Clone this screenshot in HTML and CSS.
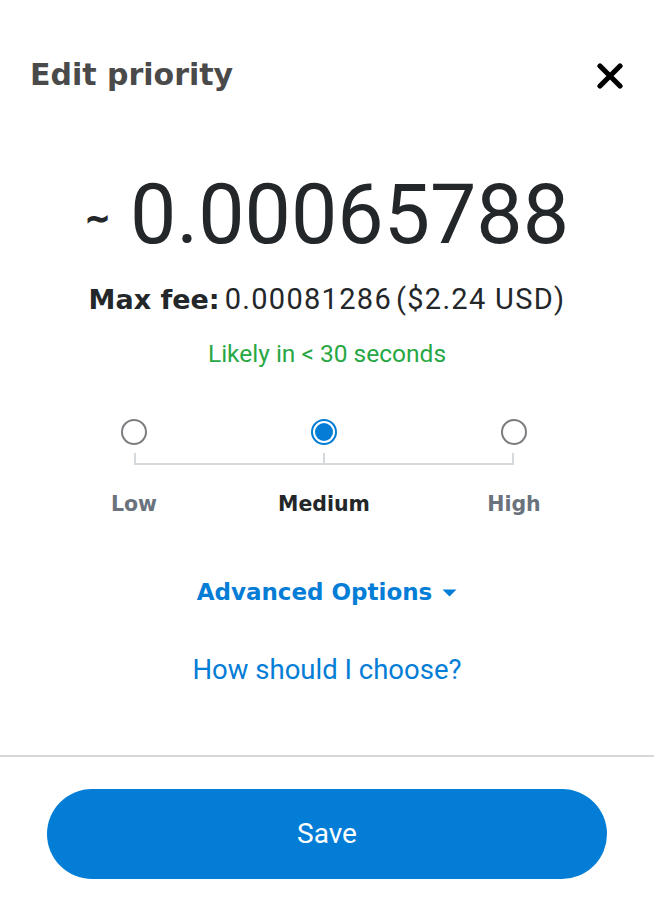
FILE: index.html
```html
<!DOCTYPE html>
<html lang="en">
<head>
<meta charset="utf-8">
<title>Edit priority</title>
<link rel="stylesheet" href="styles.css">
</head>
<body>
<div class="modal">
  <header class="header">
    <h1 class="title">Edit priority</h1>
    <button class="close" aria-label="Close">
      <svg width="26" height="26" viewBox="0 0 26 26"><path d="M3 3 L23 23 M23 3 L3 23" stroke="#000" stroke-width="5.2" stroke-linecap="round" fill="none"/></svg>
    </button>
  </header>

  <div class="amount">
    <span class="tilde">~</span>
    <span class="value">0.00065788</span>
  </div>

  <div class="max-fee"><span class="label">Max fee:</span><span class="fee">0.00081286</span><span class="fee fiat">($2.24 USD)</span></div>

  <div class="eta">Likely in &lt; 30 seconds</div>

  <div class="levels">
    <div class="radios">
      <span class="radio"></span>
      <span class="radio checked"></span>
      <span class="radio"></span>
    </div>
    <div class="track"><span class="tick"></span><span class="tick"></span><span class="tick"></span></div>
    <div class="labels">
      <span>Low</span>
      <span class="active">Medium</span>
      <span>High</span>
    </div>
  </div>

  <button class="advanced">Advanced Options
    <svg width="15" height="8" viewBox="0 0 15 8"><path d="M0.5 0.5 H14.5 L7.5 7.5 Z" fill="#037dd6"/></svg>
  </button>

  <a class="help" href="#">How should I choose?</a>

  <footer class="footer">
    <button class="save">Save</button>
  </footer>
</div>
</body>
</html>
```
FILE: styles.css
```css
html, body {
  margin: 0;
  background: #ffffff;
}

body {
  font-family: Roboto, "Liberation Sans", sans-serif;
  color: #24272a;
}

.modal {
  display: flex;
  flex-direction: column;
}

.header {
  display: flex;
  justify-content: space-between;
  align-items: center;
  padding: 57px 31px 0 30px;
}

.title {
  margin: 0;
  font: 700 30px/36px "DejaVu Sans", sans-serif;
  color: #4a4a4a;
}

.close {
  display: block;
  width: 26px;
  height: 26px;
  margin-top: 2px;
  padding: 0;
  border: 0;
  background: none;
}

.close svg {
  display: block;
}

.amount {
  display: flex;
  justify-content: center;
  align-items: center;
  gap: 20px;
  margin-top: 81px;
}

.tilde {
  font: 700 30px/30px "DejaVu Sans", sans-serif;
  -webkit-text-stroke: 1.2px #24272a;
  margin-top: 8px;
}

.value {
  font-size: 82.5px;
  line-height: 82px;
  font-weight: 400;
}

.max-fee {
  margin-top: 26px;
  text-align: center;
  font-size: 29px;
  line-height: 34px;
}

.max-fee .label {
  font: 700 27px/34px "DejaVu Sans", sans-serif;
  margin-right: 5px;
}

.max-fee .fee {
  letter-spacing: 1.3px;
}

.max-fee .fiat {
  margin-left: 4px;
}

.eta {
  margin-top: 22px;
  text-align: center;
  color: #28a745;
  font-size: 24.5px;
  line-height: 30px;
}

.levels {
  margin-top: 50px;
  padding: 0 45px 0 39px;
}

.radios,
.labels {
  display: grid;
  grid-template-columns: repeat(3, 1fr);
  justify-items: center;
}

.radio {
  display: block;
  width: 26px;
  height: 26px;
  box-sizing: border-box;
  border: 2px solid #7b7d80;
  border-radius: 50%;
  background: #ffffff;
}

.radio.checked {
  border-color: #037dd6;
  padding: 2px;
  background: #037dd6;
  background-clip: content-box;
}

.track {
  margin: 8px 95px 0;
  height: 12px;
  box-sizing: border-box;
  border-bottom: 2px solid #d6d9dc;
  display: flex;
  justify-content: space-between;
}

.tick {
  width: 2px;
  background: #d6d9dc;
}

.labels {
  margin-top: 26px;
  font: 700 20.5px/26px "DejaVu Sans", sans-serif;
  color: #6a737d;
}

.labels .active {
  color: #24272a;
}

.advanced {
  display: flex;
  align-items: center;
  gap: 10px;
  margin: 61px auto 0;
  padding: 0;
  border: 0;
  background: none;
  color: #037dd6;
  font: 700 23px/28px "DejaVu Sans", sans-serif;
}

.advanced svg {
  display: block;
  margin-top: 2px;
}

.help {
  display: block;
  margin-top: 48px;
  text-align: center;
  color: #037dd6;
  text-decoration: none;
  font-size: 27.5px;
  line-height: 32px;
}

.footer {
  margin-top: 69px;
  border-top: 2px solid #d6d9dc;
  padding: 32px 47px 0;
}

.save {
  display: block;
  width: 100%;
  height: 90px;
  border: 0;
  border-radius: 45px;
  background: #037dd6;
  color: #ffffff;
  font: 400 28px/1 Roboto, "Liberation Sans", sans-serif;
}
```
